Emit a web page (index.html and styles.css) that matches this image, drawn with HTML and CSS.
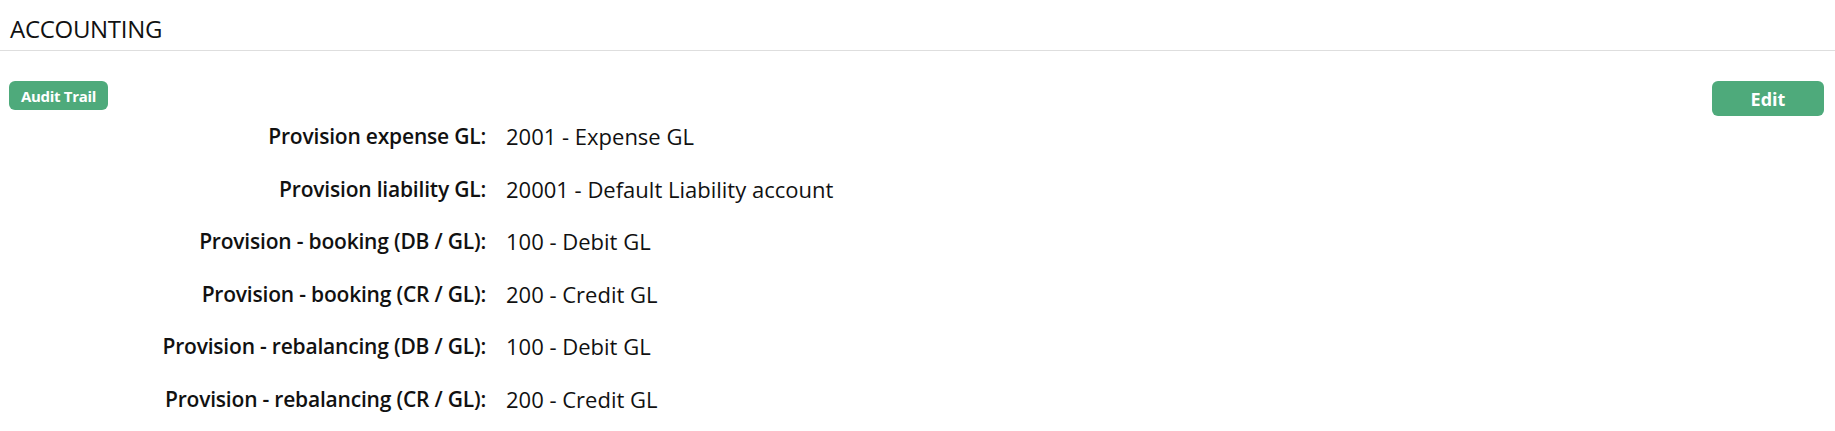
FILE: index.html
```html
<!DOCTYPE html>
<html>
<head>
<meta charset="utf-8">
<link rel="stylesheet" href="styles.css">
</head>
<body>
<div class="panel">
  <div class="panel-header">
    <h2 class="panel-title">ACCOUNTING</h2>
  </div>
  <div class="panel-body">
    <div class="toolbar">
      <button class="btn btn-small">Audit Trail</button>
      <button class="btn btn-edit">Edit</button>
    </div>
    <dl class="fields">
      <dt>Provision expense GL:</dt><dd>2001 - Expense GL</dd>
      <dt>Provision liability GL:</dt><dd>20001 - Default Liability account</dd>
      <dt>Provision - booking (DB / GL):</dt><dd>100 - Debit GL</dd>
      <dt>Provision - booking (CR / GL):</dt><dd>200 - Credit GL</dd>
      <dt>Provision - rebalancing (DB / GL):</dt><dd>100 - Debit GL</dd>
      <dt>Provision - rebalancing (CR / GL):</dt><dd>200 - Credit GL</dd>
    </dl>
  </div>
</div>
</body>
</html>
```
FILE: styles.css
```css
html, body {
  margin: 0;
  padding: 0;
  background: #fff;
}
body {
  font-family: "Open Sans", "Liberation Sans", sans-serif;
  color: #111;
}
.panel-header {
  border-bottom: 1px solid #dedede;
  padding: 6px 10px 0;
  height: 44px;
  display: flex;
  align-items: center;
}
.panel-title {
  margin: 0;
  font-size: 24px;
  font-weight: 400;
  letter-spacing: -0.3px;
}
.panel-body {
  padding: 30px 11px 0 9px;
}
.toolbar {
  display: flex;
  justify-content: space-between;
  align-items: flex-start;
}
.btn {
  border: none;
  background: #4eaa7b;
  color: #fff;
  font-family: inherit;
  font-weight: 700;
  border-radius: 6px;
  cursor: pointer;
}
.btn-small {
  height: 29px;
  width: 99px;
  font-size: 15px;
  padding: 0;
  letter-spacing: -0.3px;
}
.btn-edit {
  height: 35px;
  width: 112px;
  font-size: 18px;
  padding: 0;
}
.fields {
  margin: 5px 0 0;
  display: grid;
  grid-template-columns: 477px 1fr;
  column-gap: 20px;
  row-gap: 22.6px;
  font-size: 22px;
  line-height: 30px;
}
.fields dt {
  text-align: right;
  font-weight: 600;
  font-size: 21px;
  letter-spacing: -0.2px;
}
.fields dd {
  margin: 0;
}
```
